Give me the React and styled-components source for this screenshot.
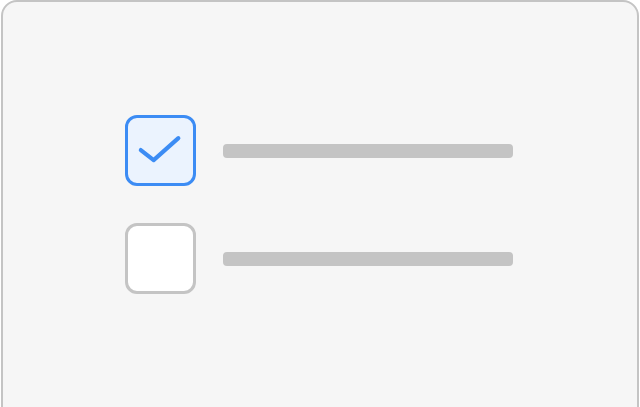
import styled, { createGlobalStyle } from "styled-components";

const Global = createGlobalStyle`
  html, body {
    margin: 0;
    padding: 0;
    background: #ffffff;
    overflow: hidden;
    font-family: "Liberation Sans", Arial, sans-serif;
  }
`;

const Card = styled.div`
  box-sizing: border-box;
  margin: 0 1px;
  height: 440px;
  background: #f6f6f6;
  border: 2px solid #c4c4c4;
  border-radius: 16px;
  padding: 113px 0 0 122px;
  display: flex;
  flex-direction: column;
  gap: 37px;
`;

const Row = styled.div`
  display: flex;
  align-items: center;
  gap: 27px;
`;

const Box = styled.div`
  box-sizing: border-box;
  width: 71px;
  height: 71px;
  border-radius: 12px;
  border: 3px solid ${(p) => (p.checked ? "#3c8cf4" : "#c4c4c4")};
  background: ${(p) => (p.checked ? "#ebf3fe" : "#ffffff")};
  display: flex;
  align-items: center;
  justify-content: center;
`;

const Bar = styled.div`
  width: 290px;
  height: 14px;
  border-radius: 4px;
  background: #c4c4c4;
`;

const Check = () => (
  <svg width="71" height="71" viewBox="0 0 71 71" style={{ display: "block" }}>
    <path
      d="M14 35 L28 46 L55 22"
      fill="none"
      stroke="#3c8cf4"
      strokeWidth="4.5"
      strokeLinecap="round"
      strokeLinejoin="round"
    />
  </svg>
);

export default function App() {
  return (
    <>
      <Global />
      <Card>
        <Row>
          <Box checked>
            <Check />
          </Box>
          <Bar />
        </Row>
        <Row>
          <Box />
          <Bar />
        </Row>
      </Card>
    </>
  );
}
